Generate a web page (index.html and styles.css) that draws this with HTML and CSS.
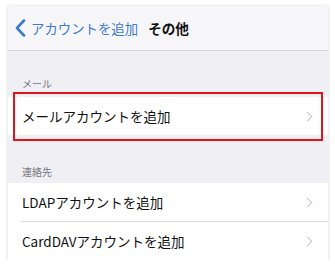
FILE: index.html
```html
<!DOCTYPE html>
<html lang="ja">
<head>
    <meta charset="UTF-8">
    <meta name="viewport" content="width=device-width, initial-scale=1.0">
    <title>その他</title>
    <link rel="stylesheet" href="styles.css">
</head>
<body>
    <div class="screen">
        <div class="navbar">
            <a class="back" href="#">
                <svg class="back-icon" width="11" height="18" viewBox="0 0 11 18">
                    <path d="M9 1.5 L2 9 L9 16.5" fill="none" stroke="#3b7bd0" stroke-width="2.6" stroke-linecap="round" stroke-linejoin="round"/>
                </svg>
                <span>アカウントを追加</span>
            </a>
            <span class="title">その他</span>
        </div>

        <div class="section-head first">メール</div>
        <div class="group">
            <div class="row marked">
                <span>メールアカウントを追加</span>
                <span class="chev"></span>
            </div>
        </div>

        <div class="section-head second">連絡先</div>
        <div class="group">
            <div class="row">
                <span>LDAPアカウントを追加</span>
                <span class="chev"></span>
            </div>
            <div class="row sep">
                <span>CardDAVアカウントを追加</span>
                <span class="chev"></span>
            </div>
        </div>
    </div>
</body>
</html>
```

FILE: styles.css
```css
body {
    margin: 0;
    background: #ffffff;
    font-family: "Noto Sans CJK JP", "Noto Sans", sans-serif;
    padding: 6px 7px 0 8px;
}

.screen {
    width: 320px;
    height: 254px;
    background: #efeff4;
    box-shadow: 0 0 3px rgba(0, 0, 0, 0.18);
}

.navbar {
    height: 44px;
    background: #f6f6f8;
    border-bottom: 1px solid #d6d6da;
    display: flex;
    align-items: center;
    padding-left: 7px;
}

.back {
    display: flex;
    align-items: center;
    color: #3b7bd0;
    text-decoration: none;
    font-size: 13.4px;
}

.back-icon {
    margin-right: 5px;
}

.title {
    margin-left: 10px;
    font-size: 13.6px;
    font-weight: bold;
    color: #111;
}

.section-head {
    font-size: 10px;
    color: #77777c;
    padding-left: 14px;
    display: flex;
    align-items: flex-end;
    box-sizing: border-box;
    line-height: 13px;
}

.section-head.first {
    height: 46px;
    padding-bottom: 7px;
}

.section-head.second {
    height: 48px;
    padding-bottom: 5px;
}

.group {
    background: #ffffff;
}

.row {
    height: 38px;
    display: flex;
    align-items: center;
    justify-content: space-between;
    padding: 0 15px 0 14px;
    font-size: 13.5px;
    color: #111;
    position: relative;
}

/* inset hairline between rows */
.sep {
    margin-top: 1px;
}

.sep::before {
    content: "";
    position: absolute;
    left: 13px;
    right: 0;
    top: -1px;
    height: 1px;
    background: #dcdce0;
}

.chev {
    width: 6px;
    height: 6px;
    border-top: 1.5px solid #c4c4c9;
    border-right: 1.5px solid #c4c4c9;
    transform: rotate(45deg);
    margin-right: 2px;
}

.marked::after {
    content: "";
    position: absolute;
    left: 5px;
    right: 5px;
    top: -5px;
    bottom: -6px;
    border: 2px solid #e3131b;
}
```
